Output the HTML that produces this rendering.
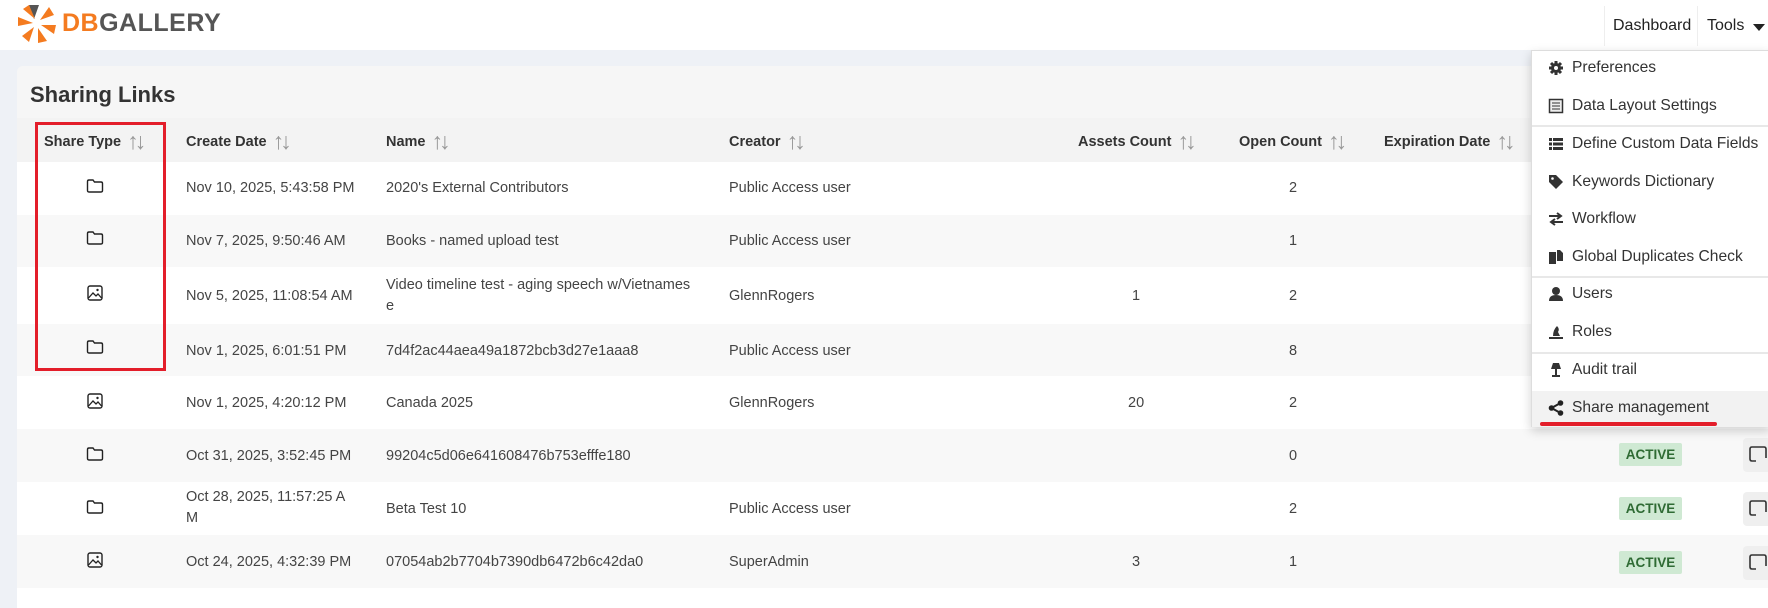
<!DOCTYPE html>
<html><head><meta charset="utf-8"><style>
*{margin:0;padding:0;box-sizing:border-box}
body{width:1768px;height:596px;overflow:hidden;background:#eef1f6;font-family:"Liberation Sans",sans-serif;color:#333;position:relative}
.top{position:absolute;left:0;top:0;width:1768px;height:50px;background:#fff}
.logo{position:absolute;left:62px;top:9px;font-size:25px;font-weight:bold;letter-spacing:0.5px}
.nav{position:absolute;top:0;height:50px;line-height:52px;font-size:16px;color:#222}
.card{position:absolute;left:17px;top:66px;width:1760px;height:540px;background:#f6f6f6;border-radius:6px}
.title{position:absolute;left:30px;top:82px;font-size:22px;font-weight:bold;color:#333}
.row{position:absolute;left:17px;width:1760px}
.c{position:absolute;font-size:14.5px;color:#444;white-space:nowrap}
.h{font-weight:bold;color:#333}
.arr{color:#999;font-weight:normal;font-size:23px;letter-spacing:-4px;margin-left:6px;vertical-align:-3px;line-height:14px}
.badge{position:absolute;left:1619px;width:63px;height:23px;background:#cfe9d3;color:#2f6b34;font-weight:bold;font-size:13.5px;text-align:center;line-height:23px;border-radius:2px}
.copy{position:absolute;left:1743px;width:30px;height:34px;background:#efefef;border-radius:4px}
.dd{position:absolute;left:1531px;top:50px;width:240px;height:377px;background:#fff;border:1px solid #ddd;box-shadow:0 4px 10px rgba(0,0,0,.18)}
.it{position:absolute;left:0;width:240px;font-size:15.6px;color:#333;padding-left:40px}
.ic{position:absolute;left:16px;top:1px;width:16px;height:16px}
.dv{position:absolute;left:0;width:240px;height:2px;background:#e8e8e8}
</style></head><body>
<div class="top"></div>
<svg style="position:absolute;left:16px;top:2px" width="42" height="42" viewBox="0 0 42 42">
<g fill="#f47b20" transform="translate(21,21)">
<path d="M-3,-4 L-8,-18 L2,-18 Z" fill="#555"/>
<path d="M3,-3 L12,-16 L17,-8 Z"/>
<path d="M4,2 L19,2 L17,11 Z"/>
<path d="M1,5 L10,18 L1,20 Z"/>
<path d="M-3,4 L-8,19 L-15,13 Z"/>
<path d="M-4,0 L-19,3 L-19,-6 Z"/>
<path d="M-2,-4 L-14,-14 L-8,-18 Z" fill="#f47b20"/>
</g></svg>
<div class="logo"><span style="color:#f47b20">DB</span><span style="color:#555">GALLERY</span></div>
<div style="position:absolute;left:1604px;top:6px;width:1px;height:40px;background:#eee"></div>
<div style="position:absolute;left:1697px;top:6px;width:1px;height:40px;background:#eee"></div>
<div class="nav" style="left:1613px">Dashboard</div>
<div class="nav" style="left:1707px">Tools</div>
<svg style="position:absolute;left:1753px;top:24px" width="12" height="7"><path d="M0 0H12L6 7Z" fill="#222"/></svg>

<div class="card"></div>
<div class="title">Sharing Links</div>

<div class="row" style="top:118px;height:44px;background:#f3f3f3"></div>
<div class="c h" style="left:44px;top:134px">Share Type<span class="arr">↑↓</span></div>
<div class="c h" style="left:186px;top:134px">Create Date<span class="arr">↑↓</span></div>
<div class="c h" style="left:386px;top:134px">Name<span class="arr">↑↓</span></div>
<div class="c h" style="left:729px;top:134px">Creator<span class="arr">↑↓</span></div>
<div class="c h" style="left:1078px;top:134px">Assets Count<span class="arr">↑↓</span></div>
<div class="c h" style="left:1239px;top:134px">Open Count<span class="arr">↑↓</span></div>
<div class="c h" style="left:1384px;top:134px">Expiration Date<span class="arr">↑↓</span></div>

<div class="row" style="top:162px;height:53px;background:#fff"></div>
<div class="row" style="top:215px;height:52px;background:#f8f8f8"></div>
<div class="row" style="top:267px;height:57px;background:#fff"></div>
<div class="row" style="top:324px;height:52px;background:#f8f8f8"></div>
<div class="row" style="top:376px;height:53px;background:#fff"></div>
<div class="row" style="top:429px;height:53px;background:#f8f8f8"></div>
<div class="row" style="top:482px;height:53px;background:#fff"></div>
<div class="row" style="top:535px;height:53px;background:#f8f8f8"></div>
<div class="row" style="top:588px;height:20px;background:#fff"></div>

<svg width="0" height="0" style="position:absolute"><defs>
<symbol id="fo" viewBox="0 0 18 16"><path d="M1.5 3.5 Q1.5 2 3 2 H7 L8.5 4 H15 Q16.5 4 16.5 5.5 V12.5 Q16.5 14 15 14 H3 Q1.5 14 1.5 12.5 Z" fill="none" stroke="#222" stroke-width="1.4"/></symbol>
<symbol id="im" viewBox="0 0 18 18"><rect x="2" y="2" width="14" height="14" rx="2" fill="none" stroke="#222" stroke-width="1.4"/><path d="M2.5 14 L7 9 L10 12 L12 10 L15.5 14" fill="none" stroke="#222" stroke-width="1.3"/><circle cx="11.5" cy="6" r="1.2" fill="#222"/></symbol>
</defs></svg>

<svg style="position:absolute;left:86px;top:178px" width="18" height="16"><use href="#fo"/></svg>
<div class="c" style="left:186px;top:180px">Nov 10, 2025, 5:43:58 PM</div>
<div class="c" style="left:386px;top:180px">2020's External Contributors</div>
<div class="c" style="left:729px;top:180px">Public Access user</div>
<div class="c" style="left:1289px;top:180px">2</div>

<svg style="position:absolute;left:86px;top:230px" width="18" height="16"><use href="#fo"/></svg>
<div class="c" style="left:186px;top:233px">Nov 7, 2025, 9:50:46 AM</div>
<div class="c" style="left:386px;top:233px">Books - named upload test</div>
<div class="c" style="left:729px;top:233px">Public Access user</div>
<div class="c" style="left:1289px;top:233px">1</div>

<svg style="position:absolute;left:86px;top:284px" width="18" height="18"><use href="#im"/></svg>
<div class="c" style="left:186px;top:288px">Nov 5, 2025, 11:08:54 AM</div>
<div class="c" style="left:386px;top:277px">Video timeline test - aging speech w/Vietnames</div>
<div class="c" style="left:386px;top:298px">e</div>
<div class="c" style="left:729px;top:288px">GlennRogers</div>
<div class="c" style="left:1132px;top:288px">1</div>
<div class="c" style="left:1289px;top:288px">2</div>

<svg style="position:absolute;left:86px;top:339px" width="18" height="16"><use href="#fo"/></svg>
<div class="c" style="left:186px;top:343px">Nov 1, 2025, 6:01:51 PM</div>
<div class="c" style="left:386px;top:343px">7d4f2ac44aea49a1872bcb3d27e1aaa8</div>
<div class="c" style="left:729px;top:343px">Public Access user</div>
<div class="c" style="left:1289px;top:343px">8</div>

<svg style="position:absolute;left:86px;top:392px" width="18" height="18"><use href="#im"/></svg>
<div class="c" style="left:186px;top:395px">Nov 1, 2025, 4:20:12 PM</div>
<div class="c" style="left:386px;top:395px">Canada 2025</div>
<div class="c" style="left:729px;top:395px">GlennRogers</div>
<div class="c" style="left:1128px;top:395px">20</div>
<div class="c" style="left:1289px;top:395px">2</div>

<svg style="position:absolute;left:86px;top:446px" width="18" height="16"><use href="#fo"/></svg>
<div class="c" style="left:186px;top:448px">Oct 31, 2025, 3:52:45 PM</div>
<div class="c" style="left:386px;top:448px">99204c5d06e641608476b753efffe180</div>
<div class="c" style="left:1289px;top:448px">0</div>
<div class="badge" style="top:443px">ACTIVE</div>
<div class="copy" style="top:438px"></div>

<svg style="position:absolute;left:86px;top:499px" width="18" height="16"><use href="#fo"/></svg>
<div class="c" style="left:186px;top:489px">Oct 28, 2025, 11:57:25 A</div>
<div class="c" style="left:186px;top:510px">M</div>
<div class="c" style="left:386px;top:501px">Beta Test 10</div>
<div class="c" style="left:729px;top:501px">Public Access user</div>
<div class="c" style="left:1289px;top:501px">2</div>
<div class="badge" style="top:497px">ACTIVE</div>
<div class="copy" style="top:492px"></div>

<svg style="position:absolute;left:86px;top:551px" width="18" height="18"><use href="#im"/></svg>
<div class="c" style="left:186px;top:554px">Oct 24, 2025, 4:32:39 PM</div>
<div class="c" style="left:386px;top:554px">07054ab2b7704b7390db6472b6c42da0</div>
<div class="c" style="left:729px;top:554px">SuperAdmin</div>
<div class="c" style="left:1132px;top:554px">3</div>
<div class="c" style="left:1289px;top:554px">1</div>
<div class="badge" style="top:551px">ACTIVE</div>
<div class="copy" style="top:546px"></div>

<svg style="position:absolute;left:1748px;top:444px" width="22" height="130" viewBox="0 0 22 130">
<g fill="none" stroke="#333" stroke-width="1.6"><path d="M4 3 H16 Q18 3 18 5 V14 M4 3 Q2 3 2 5 V15 Q2 17 4 17 H8"/><path d="M4 57 H16 Q18 57 18 59 V68 M4 57 Q2 57 2 59 V69 Q2 71 4 71 H8"/><path d="M4 111 H16 Q18 111 18 113 V122 M4 111 Q2 111 2 113 V123 Q2 125 4 125 H8"/></g></svg>

<div style="position:absolute;left:35px;top:122px;width:131px;height:249px;border:3px solid #e31e2a"></div>

<div class="dd">
<div class="it" style="top:8px"><svg class="ic" viewBox="0 0 16 16"><circle cx="8" cy="8" r="5" fill="#333"/><g stroke="#333" stroke-width="3"><path d="M8 1V15M1 8H15M3 3L13 13M13 3L3 13"/></g><circle cx="8" cy="8" r="2" fill="#fff"/></svg>Preferences</div>
<div class="it" style="top:46px"><svg class="ic" viewBox="0 0 16 16"><rect x="1.5" y="1.5" width="13" height="13" fill="#eee" stroke="#333" stroke-width="1.5"/><path d="M4 5H12M4 8H12M4 11H12" stroke="#333"/></svg>Data Layout Settings</div>
<div class="dv" style="top:74px"></div>
<div class="it" style="top:84px"><svg class="ic" viewBox="0 0 16 16"><path d="M1 2H4V5H1ZM1 6.5H4V9.5H1ZM1 11H4V14H1ZM5 2H15V5H5ZM5 6.5H15V9.5H5ZM5 11H15V14H5Z" fill="#333"/></svg>Define Custom Data Fields</div>
<div class="it" style="top:122px"><svg class="ic" viewBox="0 0 16 16"><path d="M1 1H8L15 8L8 15L1 8Z" fill="#333"/><circle cx="4.5" cy="4.5" r="1.3" fill="#fff"/></svg>Keywords Dictionary</div>
<div class="it" style="top:159px"><svg class="ic" viewBox="0 0 16 16"><path d="M1 5H12M9 2L13 5L9 8M15 11H4M7 8L3 11L7 14" stroke="#333" stroke-width="2" fill="none"/></svg>Workflow</div>
<div class="it" style="top:197px"><svg class="ic" viewBox="0 0 16 16"><path d="M1 3H8V15H1ZM9 1H12L15 4V12H9Z" fill="#333"/></svg>Global Duplicates Check</div>
<div class="dv" style="top:225px"></div>
<div class="it" style="top:234px"><svg class="ic" viewBox="0 0 16 16"><circle cx="8" cy="5" r="4" fill="#333"/><path d="M1 15Q1 9 8 9Q15 9 15 15Z" fill="#333"/></svg>Users</div>
<div class="it" style="top:272px"><svg class="ic" viewBox="0 0 16 16"><path d="M5 12Q5 6 9 2Q12 5 10 8L12 12Z" fill="#333"/><rect x="1" y="13" width="14" height="2" fill="#333"/></svg>Roles</div>
<div class="dv" style="top:301px"></div>
<div class="it" style="top:310px"><svg class="ic" viewBox="0 0 16 16"><path d="M3 7L5 1H11L13 7ZM7 7H9V13H12V15H4V13H7Z" fill="#333"/></svg>Audit trail</div>
<div style="position:absolute;left:0;top:340px;width:240px;height:36px;background:#f2f2f2"></div>
<div class="it" style="top:348px"><svg class="ic" viewBox="0 0 16 16"><circle cx="3.5" cy="8" r="2.8" fill="#222"/><circle cx="12.5" cy="3" r="2.8" fill="#222"/><circle cx="12.5" cy="13" r="2.8" fill="#222"/><path d="M3.5 8L12.5 3M3.5 8L12.5 13" stroke="#222" stroke-width="2"/></svg>Share management</div>
<div style="position:absolute;left:8px;top:371px;width:177px;height:4px;background:#e31e2a;border-radius:2px"></div>
</div>
</body></html>
